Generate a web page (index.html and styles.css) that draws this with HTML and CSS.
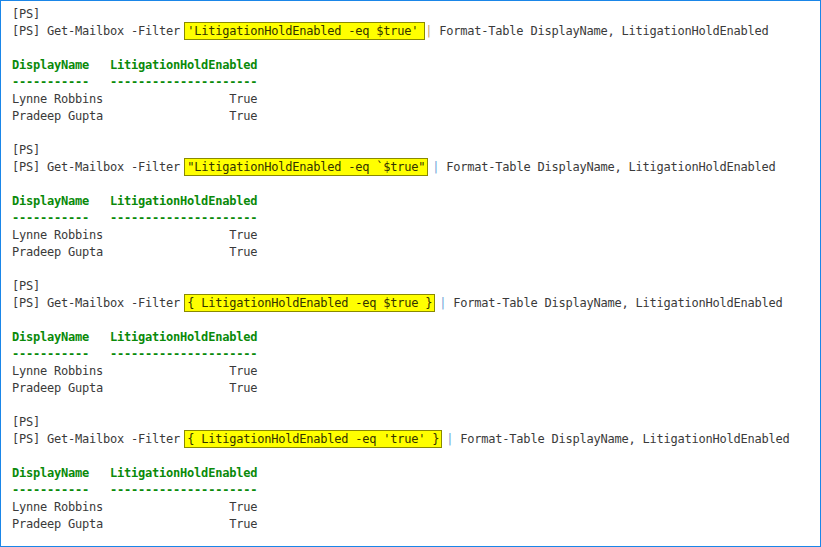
FILE: index.html
```html
<!DOCTYPE html>
<html lang="en">

<head>
    <meta charset="UTF-8">
    <title>Get-Mailbox LitigationHold</title>
    <link rel="stylesheet" href="styles.css">
</head>

<body>

    <div class="console">
        <!-- Block 1 -->
        <pre class="block">[PS]
[PS] Get-Mailbox -Filter <span class="hl hl-wide">'LitigationHoldEnabled -eq $true'</span> <span class="pipe orange">|</span> Format-Table DisplayName, LitigationHoldEnabled

<span class="head">DisplayName   LitigationHoldEnabled</span>
<span class="head">-----------   ---------------------</span>
Lynne Robbins                  True
Pradeep Gupta                  True
</pre>

        <!-- Block 2 -->
        <pre class="block">[PS]
[PS] Get-Mailbox -Filter <span class="hl">"LitigationHoldEnabled -eq `$true"</span> <span class="pipe">|</span> Format-Table DisplayName, LitigationHoldEnabled

<span class="head">DisplayName   LitigationHoldEnabled</span>
<span class="head">-----------   ---------------------</span>
Lynne Robbins                  True
Pradeep Gupta                  True
</pre>

        <!-- Block 3 -->
        <pre class="block">[PS]
[PS] Get-Mailbox -Filter <span class="hl">{ LitigationHoldEnabled -eq $true }</span> <span class="pipe">|</span> Format-Table DisplayName, LitigationHoldEnabled

<span class="head">DisplayName   LitigationHoldEnabled</span>
<span class="head">-----------   ---------------------</span>
Lynne Robbins                  True
Pradeep Gupta                  True
</pre>

        <!-- Block 4 -->
        <pre class="block">[PS]
[PS] Get-Mailbox -Filter <span class="hl">{ LitigationHoldEnabled -eq 'true' }</span> <span class="pipe">|</span> Format-Table DisplayName, LitigationHoldEnabled

<span class="head">DisplayName   LitigationHoldEnabled</span>
<span class="head">-----------   ---------------------</span>
Lynne Robbins                  True
Pradeep Gupta                  True</pre>
    </div>

</body>

</html>
```

FILE: styles.css
```css
html,
body {
    margin: 0;
    padding: 0;
    background-color: #ffffff;
}

.console {
    box-sizing: border-box;
    width: 821px;
    height: 547px;
    border: 1px solid #1a86e8;
    padding: 5px 11px 0 11px;
    overflow: hidden;
}

.block {
    margin: 0;
    font-family: "DejaVu Sans Mono", "Liberation Mono", monospace;
    font-size: 12px;
    letter-spacing: -0.22px;
    line-height: 17px;
    color: #3a3a3a;
}

.block + .block {
    margin-top: 17px;
}

.hl {
    background-color: #ffff00;
    border: 1px solid #8a8a00;
    padding: 1px 2px;
    margin: 0 -3px;
    color: #333300;
}

.hl-wide {
    padding-right: 6px;
    margin-right: -7px;
}

.pipe {
    color: #6fa3d8;
}

.pipe.orange {
    color: #c8a060;
}

.head {
    color: #0a8a0a;
    font-weight: bold;
}
```
